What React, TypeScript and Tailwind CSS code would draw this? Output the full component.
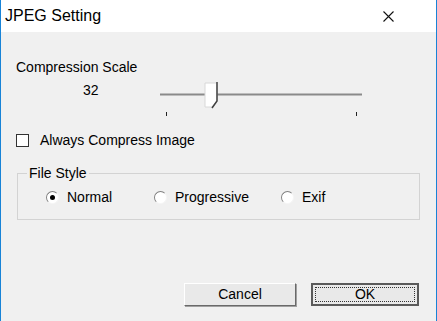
import React from 'react';

const ui = { fontFamily: '"Liberation Sans", Arial, sans-serif' };

function Radio({ label, checked, className }: { label: string; checked?: boolean; className?: string }) {
  return (
    <div className={`flex items-center ${className ?? ''}`}>
      <span className="relative flex h-[13px] w-[13px] items-center justify-center rounded-full border border-t-[#808080] border-l-[#808080] border-b-[#f5f5f5] border-r-[#f5f5f5] bg-white">
        {checked && <span className="h-[5px] w-[5px] rounded-full bg-black" />}
      </span>
      <span className="ml-[8px] text-[14px] text-black">{label}</span>
    </div>
  );
}

function Slider() {
  // track, thumb and ticks drawn as one small picture
  return (
    <svg width="210" height="40" viewBox="0 0 210 40" className="block">
      <line x1="0" y1="14.5" x2="202" y2="14.5" stroke="#8a8a8a" strokeWidth="2" />
      <path d="M45 3 L57 3 L57 21 L52 27 L45 27 Z" fill="#ffffff" stroke="#d8d8d8" strokeWidth="1" />
      <path d="M57 2 L57 21 L52 28" fill="none" stroke="#404040" strokeWidth="1.5" />
      <line x1="6.5" y1="32" x2="6.5" y2="36" stroke="#222" strokeWidth="1" />
      <line x1="196.5" y1="32" x2="196.5" y2="36" stroke="#222" strokeWidth="1" />
    </svg>
  );
}

export default function App() {
  return (
    <div className="flex h-[321px] w-[437px] flex-col border-x border-[#1883d7] bg-[#f0f0f0]" style={ui}>
      {/* title bar */}
      <div className="flex h-[32px] shrink-0 items-center justify-between bg-white pl-[4px] pr-[42px]">
        <span className="text-[16px] text-black">JPEG Setting</span>
        <svg width="11" height="11" viewBox="0 0 11 11">
          <path d="M0.5 0.5 L10.5 10.5 M10.5 0.5 L0.5 10.5" stroke="#111" strokeWidth="1.1" />
        </svg>
      </div>

      <div className="flex flex-1 flex-col px-[15px]">
        <div className="mt-[27px] text-[14px] leading-[16px] text-black">Compression Scale</div>

        <div className="mt-[5px] flex items-start">
          <span className="ml-[67px] mt-[2px] w-[77px] text-[14px] leading-[16px] text-black">32</span>
          <Slider />
        </div>

        <label className="mt-[12px] flex items-center">
          <span className="h-[13px] w-[13px] border border-[#333] bg-white" />
          <span className="ml-[11px] text-[14px] leading-[16px] text-black">Always Compress Image</span>
        </label>

        <fieldset className="mx-[1px] mt-[17px] h-[55px] border border-[#d3d3d3] pl-[28px] pt-[6px]">
          <legend className="ml-[-19px] px-[2px] text-[14px] leading-[16px] text-black">File Style</legend>
          <div className="flex items-center">
            <Radio label="Normal" checked className="w-[108px]" />
            <Radio label="Progressive" className="w-[127px]" />
            <Radio label="Exif" />
          </div>
        </fieldset>

        <div className="mt-auto mb-[15px] flex justify-end gap-[15px] pr-[2px]">
          <button className="h-[23px] w-[112px] border border-t-white border-l-white border-b-[#696969] border-r-[#696969] bg-[#e9e9e9] text-[14px] text-black shadow-[1px_1px_0_#a0a0a0]">
            Cancel
          </button>
          <button className="h-[23px] w-[108px] border-2 border-[#5a5a5a] bg-[#e9e9e9] p-[2px] text-[14px] text-black">
            <span className="flex h-full w-full items-center justify-center border border-dotted border-[#333]">OK</span>
          </button>
        </div>
      </div>
    </div>
  );
}
